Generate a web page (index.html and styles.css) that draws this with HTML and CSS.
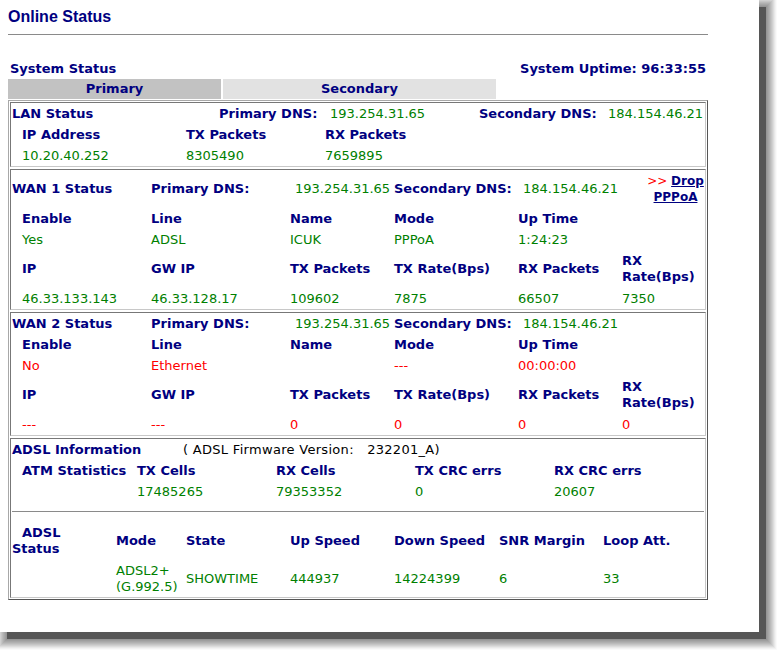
FILE: index.html
```html
<!DOCTYPE html>
<html>
<head>
<meta charset="utf-8">
<title>Online Status</title>
<link rel="stylesheet" href="styles.css">
</head>
<body>
<div class="page">
  <div class="wrap">
    <h1 class="title">Online Status</h1>
    <div class="rule"></div>
    <div class="sysbar">
      <span class="lbl">System Status</span>
      <span class="lbl">System Uptime: 96:33:55</span>
    </div>
    <div class="tabs">
      <div class="tab tab-active">Primary</div>
      <div class="tab">Secondary</div>
    </div>
    <div class="panel">
      <div class="sec">
        <div class="row lan-head">
          <span class="lbl">LAN Status</span>
          <span class="lbl">Primary DNS:</span>
          <span class="val">193.254.31.65</span>
          <span class="lbl">Secondary DNS:</span>
          <span class="val">184.154.46.21</span>
        </div>
        <div class="row lan-cols">
          <span class="lbl ind">IP Address</span>
          <span class="lbl">TX Packets</span>
          <span class="lbl">RX Packets</span>
        </div>
        <div class="row lan-cols">
          <span class="val ind">10.20.40.252</span>
          <span class="val">8305490</span>
          <span class="val">7659895</span>
        </div>
      </div>

      <div class="sec">
        <div class="row wan-head">
          <span class="lbl">WAN 1 Status</span>
          <span class="lbl">Primary DNS:</span>
          <span class="val pad">193.254.31.65</span>
          <span class="lbl">Secondary DNS:</span>
          <span class="val pad">184.154.46.21</span>
          <span class="drop"><span class="arrow">&gt;&gt;</span> <a class="drop-link" href="#">Drop<br>PPPoA</a></span>
        </div>
        <div class="row wan-cols">
          <span class="lbl ind">Enable</span>
          <span class="lbl">Line</span>
          <span class="lbl">Name</span>
          <span class="lbl">Mode</span>
          <span class="lbl">Up Time</span>
          <span></span>
        </div>
        <div class="row wan-cols">
          <span class="val ind">Yes</span>
          <span class="val">ADSL</span>
          <span class="val">ICUK</span>
          <span class="val">PPPoA</span>
          <span class="val">1:24:23</span>
          <span></span>
        </div>
        <div class="row wan-cols two">
          <span class="lbl ind">IP</span>
          <span class="lbl">GW IP</span>
          <span class="lbl">TX Packets</span>
          <span class="lbl">TX Rate(Bps)</span>
          <span class="lbl">RX Packets</span>
          <span class="lbl">RX<br>Rate(Bps)</span>
        </div>
        <div class="row wan-cols">
          <span class="val ind">46.33.133.143</span>
          <span class="val">46.33.128.17</span>
          <span class="val">109602</span>
          <span class="val">7875</span>
          <span class="val">66507</span>
          <span class="val">7350</span>
        </div>
      </div>

      <div class="sec">
        <div class="row wan-head2">
          <span class="lbl">WAN 2 Status</span>
          <span class="lbl">Primary DNS:</span>
          <span class="val pad">193.254.31.65</span>
          <span class="lbl">Secondary DNS:</span>
          <span class="val pad">184.154.46.21</span>
          <span></span>
        </div>
        <div class="row wan-cols">
          <span class="lbl ind">Enable</span>
          <span class="lbl">Line</span>
          <span class="lbl">Name</span>
          <span class="lbl">Mode</span>
          <span class="lbl">Up Time</span>
          <span></span>
        </div>
        <div class="row wan-cols">
          <span class="bad ind">No</span>
          <span class="bad">Ethernet</span>
          <span></span>
          <span class="bad">---</span>
          <span class="bad">00:00:00</span>
          <span></span>
        </div>
        <div class="row wan-cols two">
          <span class="lbl ind">IP</span>
          <span class="lbl">GW IP</span>
          <span class="lbl">TX Packets</span>
          <span class="lbl">TX Rate(Bps)</span>
          <span class="lbl">RX Packets</span>
          <span class="lbl">RX<br>Rate(Bps)</span>
        </div>
        <div class="row wan-cols">
          <span class="bad ind">---</span>
          <span class="bad">---</span>
          <span class="bad">0</span>
          <span class="bad">0</span>
          <span class="bad">0</span>
          <span class="bad">0</span>
        </div>
      </div>

      <div class="sec">
        <div class="row adsl-head">
          <span class="lbl">ADSL Information</span>
          <span class="fw">( ADSL Firmware Version:&nbsp;&nbsp; 232201_A)</span>
        </div>
        <div class="row atm">
          <span class="lbl ind">ATM Statistics</span>
          <span class="lbl">TX Cells</span>
          <span class="lbl">RX Cells</span>
          <span class="lbl">TX CRC errs</span>
          <span class="lbl">RX CRC errs</span>
        </div>
        <div class="row atm">
          <span></span>
          <span class="val">17485265</span>
          <span class="val">79353352</span>
          <span class="val">0</span>
          <span class="val">20607</span>
        </div>
        <div class="sep"></div>
        <div class="row adsl-stat stat-head">
          <span class="lbl"><span class="ind-i">ADSL</span><br>Status</span>
          <span class="lbl">Mode</span>
          <span class="lbl">State</span>
          <span class="lbl">Up Speed</span>
          <span class="lbl">Down Speed</span>
          <span class="lbl">SNR Margin</span>
          <span class="lbl">Loop Att.</span>
        </div>
        <div class="row adsl-stat two">
          <span></span>
          <span class="val">ADSL2+<br>(G.992.5)</span>
          <span class="val">SHOWTIME</span>
          <span class="val">444937</span>
          <span class="val">14224399</span>
          <span class="val">6</span>
          <span class="val">33</span>
        </div>
      </div>
    </div>
  </div>
</div>
</body>
</html>
```

FILE: styles.css
```css
* {
  box-sizing: border-box;
}

html,
body {
  margin: 0;
  padding: 0;
  background: #ffffff;
}

body {
  font-family: "DejaVu Sans", Verdana, sans-serif;
  font-size: 13px;
  line-height: 16px;
  color: #000000;
  min-height: 652px;
  padding-bottom: 20px;
}

.page {
  width: 759px;
  height: 632px;
  background: #ffffff;
  padding: 8px 0 0 8px;
  box-shadow:
    7px 7px 0 0 rgba(0, 0, 0, 0.42),
    7px 7px 0 1px rgba(0, 0, 0, 0.05),
    7px 7px 0 2px rgba(0, 0, 0, 0.05),
    7px 7px 0 3px rgba(0, 0, 0, 0.05),
    7px 7px 0 4px rgba(0, 0, 0, 0.05),
    7px 7px 0 5px rgba(0, 0, 0, 0.05),
    7px 7px 0 6px rgba(0, 0, 0, 0.05),
    7px 7px 0 7px rgba(0, 0, 0, 0.05),
    7px 7px 0 8px rgba(0, 0, 0, 0.05),
    7px 7px 0 9px rgba(0, 0, 0, 0.04),
    7px 7px 0 10px rgba(0, 0, 0, 0.03),
    7px 7px 0 11px rgba(0, 0, 0, 0.02);
}

.wrap {
  width: 700px;
}

.title {
  margin: 0;
  font: bold 16px/18px "Liberation Sans", Arial, sans-serif;
  color: #000080;
}

.rule {
  height: 1px;
  margin-top: 8px;
  background: #8a8a8a;
}

.sysbar {
  display: flex;
  justify-content: space-between;
  padding: 0 2px;
  margin-top: 26px;
}

.lbl {
  font-weight: bold;
  color: #000080;
}

.val {
  color: #008000;
}

.bad {
  color: #ff0000;
}

.fw {
  color: #000000;
  letter-spacing: 0.3px;
}

.tabs {
  display: flex;
  gap: 2px;
  margin-top: 2px;
}

.tab {
  width: 273px;
  height: 20px;
  line-height: 20px;
  text-align: center;
  font-weight: bold;
  color: #000080;
  background: #e2e2e2;
}

.tab-active {
  width: 213px;
  background: #c2c2c2;
}

.panel {
  margin-top: 1px;
  border: 1px solid;
  border-color: #a8a8a8 #555555 #555555 #a8a8a8;
  padding: 1px;
  display: flex;
  flex-direction: column;
  gap: 2px;
}

.sec {
  border: 1px solid;
  border-color: #777777 #c8c8c8 #c8c8c8 #777777;
  padding-left: 1px;
}

.row {
  display: grid;
  align-items: center;
  min-height: 21px;
}

.row.two {
  min-height: 37px;
}

.wan-cols.two {
  min-height: 38px;
}

.ind {
  padding-left: 10px;
}

.ind-i {
  padding-left: 10px;
}

.pad {
  padding-left: 5px;
}

.lan-head {
  grid-template-columns: 207px 111px 149px 129px 1fr;
}

.lan-cols {
  grid-template-columns: 174px 139px 1fr;
}

.wan-head {
  grid-template-columns: 139px 139px 104px 124px 128px 1fr;
  min-height: 38px;
}

.wan-head2 {
  grid-template-columns: 139px 139px 104px 124px 128px 1fr;
}

.wan-cols {
  grid-template-columns: 139px 139px 104px 124px 104px 1fr;
}

.drop {
  font-size: 12px;
  line-height: 16px;
  text-align: center;
}

.arrow {
  color: #ff0000;
}

.drop-link {
  font-weight: bold;
  color: #000080;
  text-decoration: underline;
}

.adsl-head {
  grid-template-columns: 171px 1fr;
}

.atm {
  grid-template-columns: 125px 139px 139px 139px 1fr;
}

.sep {
  height: 19px;
  padding-top: 9px;
  margin-right: 1px;
}

.sep::before {
  content: "";
  display: block;
  height: 1px;
  background: #8a8a8a;
}

.adsl-stat {
  grid-template-columns: 104px 70px 104px 104px 105px 104px 1fr;
}

.stat-head {
  min-height: 39px;
}
```
